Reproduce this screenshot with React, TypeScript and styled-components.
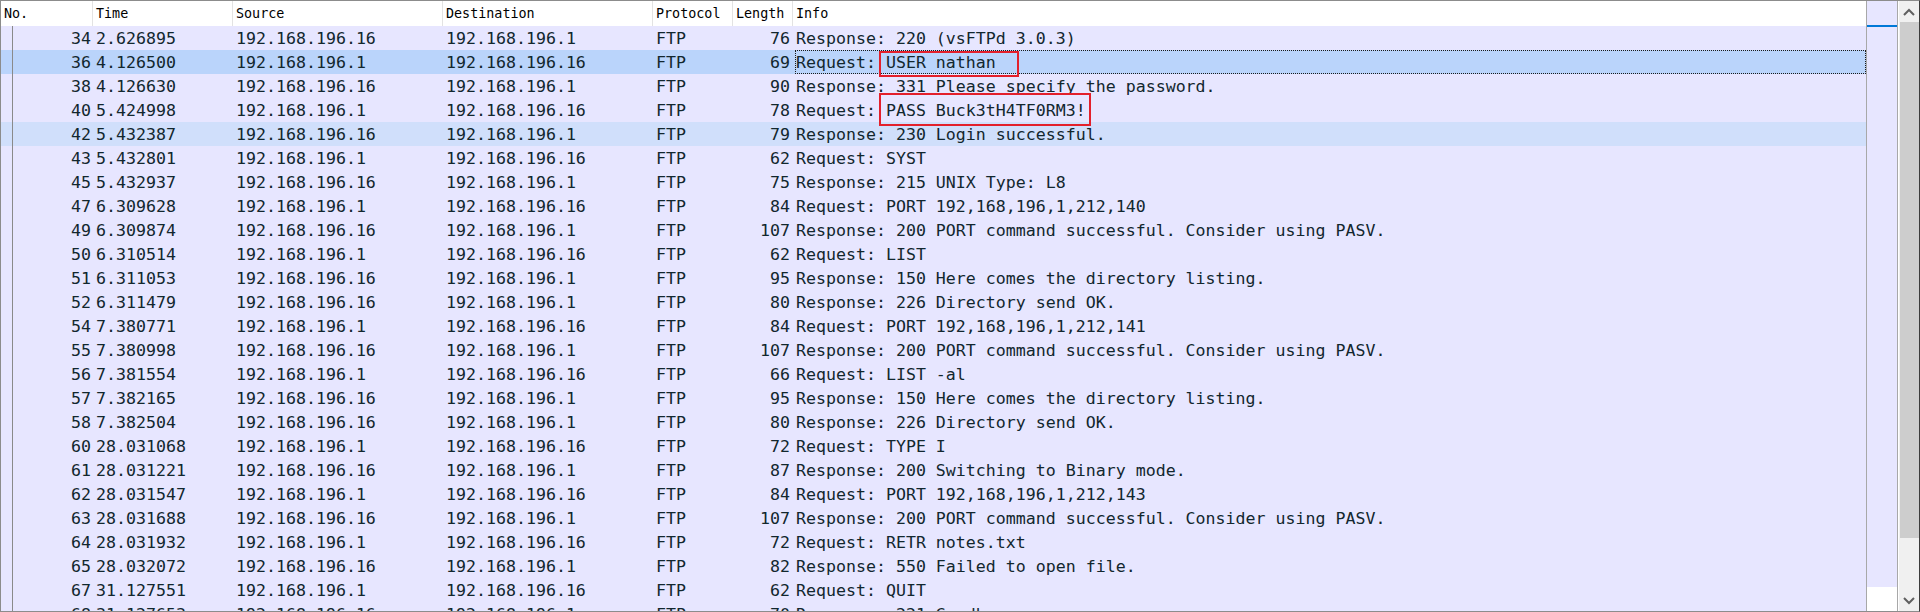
import styled, { createGlobalStyle, css } from 'styled-components';

const GlobalStyle = createGlobalStyle`
  html, body {
    margin: 0;
    padding: 0;
    background: #ffffff;
  }
  * {
    box-sizing: border-box;
  }
`;

type Packet = {
  no: number;
  time: string;
  src: string;
  dst: string;
  proto: string;
  len: number;
  info: string;
};

const A = '192.168.196.16';
const B = '192.168.196.1';

const packets: Packet[] = [
  { no: 34, time: '2.626895', src: A, dst: B, proto: 'FTP', len: 76, info: 'Response: 220 (vsFTPd 3.0.3)' },
  { no: 36, time: '4.126500', src: B, dst: A, proto: 'FTP', len: 69, info: 'Request: USER nathan' },
  { no: 38, time: '4.126630', src: A, dst: B, proto: 'FTP', len: 90, info: 'Response: 331 Please specify the password.' },
  { no: 40, time: '5.424998', src: B, dst: A, proto: 'FTP', len: 78, info: 'Request: PASS Buck3tH4TF0RM3!' },
  { no: 42, time: '5.432387', src: A, dst: B, proto: 'FTP', len: 79, info: 'Response: 230 Login successful.' },
  { no: 43, time: '5.432801', src: B, dst: A, proto: 'FTP', len: 62, info: 'Request: SYST' },
  { no: 45, time: '5.432937', src: A, dst: B, proto: 'FTP', len: 75, info: 'Response: 215 UNIX Type: L8' },
  { no: 47, time: '6.309628', src: B, dst: A, proto: 'FTP', len: 84, info: 'Request: PORT 192,168,196,1,212,140' },
  { no: 49, time: '6.309874', src: A, dst: B, proto: 'FTP', len: 107, info: 'Response: 200 PORT command successful. Consider using PASV.' },
  { no: 50, time: '6.310514', src: B, dst: A, proto: 'FTP', len: 62, info: 'Request: LIST' },
  { no: 51, time: '6.311053', src: A, dst: B, proto: 'FTP', len: 95, info: 'Response: 150 Here comes the directory listing.' },
  { no: 52, time: '6.311479', src: A, dst: B, proto: 'FTP', len: 80, info: 'Response: 226 Directory send OK.' },
  { no: 54, time: '7.380771', src: B, dst: A, proto: 'FTP', len: 84, info: 'Request: PORT 192,168,196,1,212,141' },
  { no: 55, time: '7.380998', src: A, dst: B, proto: 'FTP', len: 107, info: 'Response: 200 PORT command successful. Consider using PASV.' },
  { no: 56, time: '7.381554', src: B, dst: A, proto: 'FTP', len: 66, info: 'Request: LIST -al' },
  { no: 57, time: '7.382165', src: A, dst: B, proto: 'FTP', len: 95, info: 'Response: 150 Here comes the directory listing.' },
  { no: 58, time: '7.382504', src: A, dst: B, proto: 'FTP', len: 80, info: 'Response: 226 Directory send OK.' },
  { no: 60, time: '28.031068', src: B, dst: A, proto: 'FTP', len: 72, info: 'Request: TYPE I' },
  { no: 61, time: '28.031221', src: A, dst: B, proto: 'FTP', len: 87, info: 'Response: 200 Switching to Binary mode.' },
  { no: 62, time: '28.031547', src: B, dst: A, proto: 'FTP', len: 84, info: 'Request: PORT 192,168,196,1,212,143' },
  { no: 63, time: '28.031688', src: A, dst: B, proto: 'FTP', len: 107, info: 'Response: 200 PORT command successful. Consider using PASV.' },
  { no: 64, time: '28.031932', src: B, dst: A, proto: 'FTP', len: 72, info: 'Request: RETR notes.txt' },
  { no: 65, time: '28.032072', src: A, dst: B, proto: 'FTP', len: 82, info: 'Response: 550 Failed to open file.' },
  { no: 67, time: '31.127551', src: B, dst: A, proto: 'FTP', len: 62, info: 'Request: QUIT' },
  { no: 68, time: '31.127653', src: A, dst: B, proto: 'FTP', len: 70, info: 'Response: 221 Goodbye.' },
];

const SELECTED = 36;
const HOVERED = 42;

const COLUMNS = '92px 140px 210px 210px 80px 60px 1fr';
const MONO = `"DejaVu Sans Mono", "Liberation Mono", monospace`;

const Frame = styled.div`
  width: 1920px;
  height: 612px;
  display: flex;
  border: 1px solid #8c8c8c;
  border-right-color: #3c3c3c;
  overflow: hidden;
  background: #ffffff;
`;

const TablePane = styled.div`
  position: relative;
  flex: 1;
  display: flex;
  flex-direction: column;
  border-right: 1px solid #a8a8a8;
  overflow: hidden;
  background: #e7e6ff;
`;

const HeaderRow = styled.div`
  display: grid;
  grid-template-columns: ${COLUMNS};
  height: 25px;
  flex: none;
  background: #ffffff;
`;

const HeaderCell = styled.div<{ $last?: boolean }>`
  display: flex;
  align-items: center;
  padding-left: 3px;
  padding-bottom: 1px;
  border-right: ${(p) => (p.$last ? 'none' : '1px solid #e3e3e3')};
  font-family: ${MONO};
  font-size: 13.4px;
  color: #000000;
  white-space: pre;
`;

const Body = styled.div`
  flex: 1;
  display: flex;
  flex-direction: column;
`;

const Row = styled.div<{ $state: 'normal' | 'selected' | 'hover' }>`
  display: grid;
  grid-template-columns: ${COLUMNS};
  height: 24px;
  flex: none;
  background: ${(p) =>
    p.$state === 'selected' ? '#bad4fb' : p.$state === 'hover' ? '#d0dffb' : '#e7e6ff'};
  font-family: ${MONO};
  font-size: 16.6px;
  color: #12272e;
`;

const Cell = styled.div<{ $right?: boolean; $pr?: number }>`
  display: flex;
  align-items: center;
  white-space: pre;
  overflow: hidden;
  padding-left: 3px;
  ${(p) =>
    p.$right &&
    css`
      justify-content: flex-end;
      padding-left: 0;
      padding-right: ${p.$pr ?? 2}px;
    `}
`;

const NoCell = styled(Cell)`
  background: linear-gradient(#8a8a8a, #8a8a8a) 11px 0 / 1px 100% no-repeat;
`;

const InfoCell = styled(Cell)<{ $focus?: boolean }>`
  ${(p) =>
    p.$focus &&
    css`
      margin-left: 2px;
      padding-left: 1px;
      outline: 1px dotted #1a1a1a;
      outline-offset: -1px;
    `}
`;

const Annotation = styled.div<{ $left: number; $top: number; $w: number; $h: number }>`
  position: absolute;
  left: ${(p) => p.$left}px;
  top: ${(p) => p.$top}px;
  width: ${(p) => p.$w}px;
  height: ${(p) => p.$h}px;
  border: 2px solid #e3202b;
  pointer-events: none;
`;

const Minimap = styled.div`
  width: 31px;
  flex: none;
  display: flex;
  flex-direction: column;
  border-right: 1px solid #a8a8a8;
  margin-right: 1px;
`;

const MapBand = styled.div<{ $h?: number; $color: string }>`
  background: ${(p) => p.$color};
  ${(p) => (p.$h !== undefined ? `height: ${p.$h}px; flex: none;` : 'flex: 1;')}
`;

const Scrollbar = styled.div`
  width: 20px;
  flex: none;
  display: flex;
  flex-direction: column;
  background: #f0f0f0;
`;

const ArrowButton = styled.div`
  height: 21px;
  flex: none;
  display: flex;
  align-items: center;
  justify-content: center;
`;

const Thumb = styled.div`
  height: 516px;
  flex: none;
  margin-left: 1px;
  background: #cdcdcd;
`;

const Track = styled.div`
  flex: 1;
`;

function Chevron({ up }: { up?: boolean }) {
  return (
    <svg width="12" height="8" viewBox="0 0 12 8">
      <polyline
        points={up ? '1,7 6,2 11,7' : '1,1 6,6 11,1'}
        fill="none"
        stroke="#606060"
        strokeWidth="2"
      />
    </svg>
  );
}

const headers = ['No.', 'Time', 'Source', 'Destination', 'Protocol', 'Length', 'Info'];

export default function App() {
  return (
    <>
      <GlobalStyle />
      <Frame>
        <TablePane>
          <HeaderRow>
            {headers.map((h, i) => (
              <HeaderCell key={h} $last={i === headers.length - 1}>
                {h}
              </HeaderCell>
            ))}
          </HeaderRow>
          <Body>
            {packets.map((p) => {
              const state = p.no === SELECTED ? 'selected' : p.no === HOVERED ? 'hover' : 'normal';
              return (
                <Row key={p.no} $state={state}>
                  <NoCell $right $pr={2}>{p.no}</NoCell>
                  <Cell>{p.time}</Cell>
                  <Cell>{p.src}</Cell>
                  <Cell>{p.dst}</Cell>
                  <Cell>{p.proto}</Cell>
                  <Cell $right $pr={3}>{p.len}</Cell>
                  <InfoCell $focus={p.no === SELECTED}>{p.info}</InfoCell>
                </Row>
              );
            })}
          </Body>
          <Annotation $left={878} $top={50} $w={140} $h={26} />
          <Annotation $left={878} $top={92} $w={212} $h={33} />
        </TablePane>
        <Minimap>
          <MapBand $h={24} $color="#e7e6ff" />
          <MapBand $h={2} $color="#0078d7" />
          <MapBand $color="#e7e6ff" />
          <MapBand $h={24} $color="#ffffff" />
        </Minimap>
        <Scrollbar>
          <ArrowButton>
            <Chevron up />
          </ArrowButton>
          <Thumb />
          <Track />
          <ArrowButton>
            <Chevron />
          </ArrowButton>
        </Scrollbar>
      </Frame>
    </>
  );
}
